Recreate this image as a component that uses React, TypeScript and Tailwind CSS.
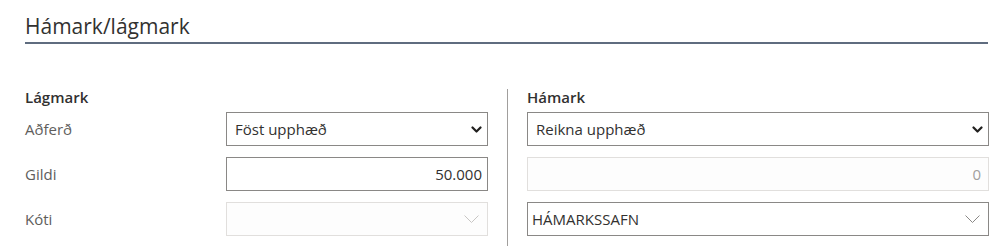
import React from "react";

const font = { fontFamily: '"Open Sans", "Noto Sans", sans-serif' };

function BoldChevron() {
  return (
    <svg width="11" height="7" viewBox="0 0 11 7" className="shrink-0">
      <path d="M1.5 1.5 L5.5 5.5 L9.5 1.5" fill="none" stroke="#201f1e" strokeWidth="2.2" strokeLinecap="round" strokeLinejoin="round" />
    </svg>
  );
}

function ThinChevron({ color }: { color: string }) {
  return (
    <svg width="15" height="8" viewBox="0 0 15 8" className="shrink-0">
      <path d="M0.5 0.5 L7.5 7.5 L14.5 0.5" fill="none" stroke={color} strokeWidth="1" />
    </svg>
  );
}

function SelectBox({ value }: { value: string }) {
  return (
    <div className="flex h-[34px] w-full items-center justify-between border border-[#8a8886] bg-white pl-[8px] pr-[5px]">
      <span className="text-[15px] text-[#323130]">{value}</span>
      <BoldChevron />
    </div>
  );
}

function NumberBox({ value, disabled }: { value: string; disabled?: boolean }) {
  return (
    <div
      className={
        disabled
          ? "flex h-[34px] w-full items-center justify-end border border-[#e1dfdd] bg-[#fdfdfd] pr-[7px]"
          : "flex h-[34px] w-full items-center justify-end border border-[#8a8886] bg-white pr-[5px]"
      }
    >
      <span className={disabled ? "text-[15px] text-[#a19f9d]" : "text-[15px] text-[#323130]"}>{value}</span>
    </div>
  );
}

function LookupBox({ value, disabled }: { value?: string; disabled?: boolean }) {
  return (
    <div
      className={
        disabled
          ? "flex h-[34px] w-full items-center justify-between border border-[#e1dfdd] bg-[#fdfdfd] pl-[4px] pr-[8px]"
          : "flex h-[34px] w-full items-center justify-between border border-[#8a8886] bg-white pl-[4px] pr-[8px]"
      }
    >
      <span className="text-[15px] text-[#323130]">{value ?? ""}</span>
      <ThinChevron color={disabled ? "#c8c6c4" : "#8a8886"} />
    </div>
  );
}

function Row({ label, children }: { label: string; children: React.ReactNode }) {
  return (
    <div className="flex h-[34px] items-center">
      <div className="w-[201px] text-[15px] text-[#605e5c]">{label}</div>
      <div className="w-[262px]">{children}</div>
    </div>
  );
}

export default function App() {
  return (
    <div className="h-[250px] w-[1004px] bg-white pl-[25px]" style={font}>
      <div className="w-[963px] border-b-2 border-[#5f6c7f] pb-[2px] pt-[12px]">
        <h2 className="text-[21px] leading-[28px] font-normal text-[#323130]">Hámark/lágmark</h2>
      </div>
      <div className="mt-[43px] flex">
        <div className="flex w-[463px] flex-col pb-[10px]">
          <div className="h-[20px] text-[15px] leading-[20px] font-semibold text-[#323130]">Lágmark</div>
          <div className="mt-[5px] flex flex-col gap-[11px]">
            <Row label="Aðferð">
              <SelectBox value="Föst upphæð" />
            </Row>
            <Row label="Gildi">
              <NumberBox value="50.000" />
            </Row>
            <Row label="Kóti">
              <LookupBox disabled />
            </Row>
          </div>
        </div>
        <div className="mx-[19px] mt-[2px] w-px self-stretch bg-[#a19f9d]" />
        <div className="flex w-[462px] flex-col pb-[10px]">
          <div className="h-[20px] text-[15px] leading-[20px] font-semibold text-[#323130]">Hámark</div>
          <div className="mt-[5px] flex flex-col gap-[11px]">
            <SelectBox value="Reikna upphæð" />
            <NumberBox value="0" disabled />
            <LookupBox value="HÁMARKSSAFN" />
          </div>
        </div>
      </div>
    </div>
  );
}
